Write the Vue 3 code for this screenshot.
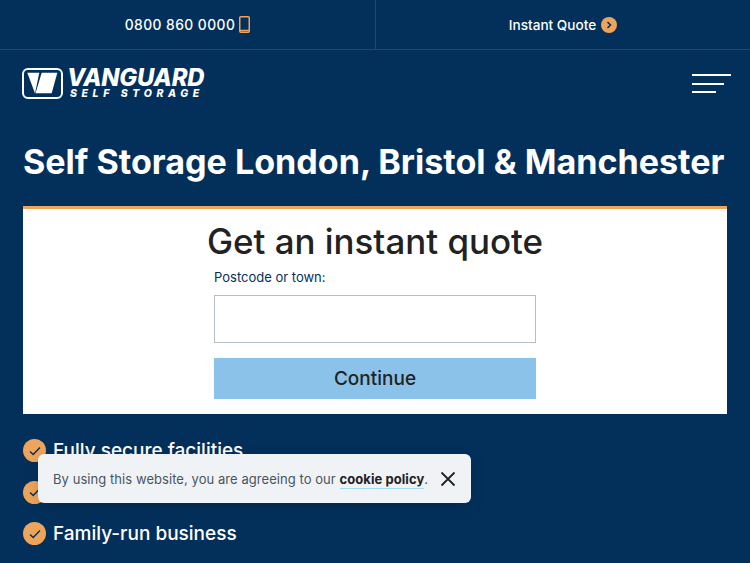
<script setup>
const features = ["Fully secure facilities", "Flexible storage terms", "Family-run business"];
</script>

<template>
  <div class="page">
    <div class="topbar">
      <a class="topbar-link phone-link">
        0800 860 0000
        <svg width="11" height="17" viewBox="0 0 11 17">
          <rect x="0.75" y="0.75" width="9.5" height="15.5" rx="1" fill="none" stroke="#eea55b" stroke-width="1.5" />
          <path d="M1 14.5h9" stroke="#eea55b" stroke-width="1.5" />
        </svg>
      </a>
      <a class="topbar-link">
        Instant Quote
        <span class="go">
          <svg width="6" height="8" viewBox="0 0 6 8">
            <path d="M1.5 1l3 3-3 3" fill="none" stroke="#03305b" stroke-width="1.6" />
          </svg>
        </span>
      </a>
    </div>

    <header class="brand">
      <div class="logo">
        <svg width="41" height="31" viewBox="0 0 41 31">
          <rect x="1" y="1" width="39" height="29" rx="5" fill="none" stroke="#fff" stroke-width="2" />
          <path d="M5.3 4.7h12L13 25.3z" fill="#fff" />
          <path d="M19.7 4.7h15.6l-5.6 20.6H13.5z" fill="#fff" />
        </svg>
        <div class="logo-text">
          <span class="logo-name">VANGUARD</span>
          <span class="logo-sub">SELF STORAGE</span>
        </div>
      </div>
      <button class="burger" aria-label="Menu">
        <span></span><span></span><span></span>
      </button>
    </header>

    <main class="content">
      <h1>Self Storage London, Bristol &amp; Manchester</h1>

      <section class="quote">
        <h2>Get an instant quote</h2>
        <form class="quote-form" @submit.prevent>
          <label for="postcode">Postcode or town:</label>
          <input id="postcode" type="text" />
          <button type="submit">Continue</button>
        </form>
      </section>

      <ul class="features">
        <li v-for="item in features" :key="item">
          <span class="tick">
            <svg width="14" height="12" viewBox="0 0 14 12">
              <path d="M2 6.5l3.2 3L12 2.5" fill="none" stroke="#03305b" stroke-width="1.4" />
            </svg>
          </span>
          {{ item }}
        </li>
      </ul>
    </main>

    <div class="cookie">
      <p>By using this website, you are agreeing to our <a>cookie policy</a>.</p>
      <button class="close" aria-label="Close">
        <svg width="16" height="16" viewBox="0 0 16 16">
          <path d="M1.5 1.5l13 13M14.5 1.5l-13 13" stroke="#222" stroke-width="1.8" />
        </svg>
      </button>
    </div>
  </div>
</template>

<style>
html,
body {
  margin: 0;
  background: #03305b;
  overflow: hidden;
}
</style>

<style scoped>
.page {
  position: relative;
  height: 563px;
  overflow: hidden;
  background: #03305b;
  color: #fff;
  font-family: Inter, "Liberation Sans", sans-serif;
}

.topbar {
  display: grid;
  grid-template-columns: 1fr 1fr;
  height: 49px;
  border-bottom: 1px solid #1d4a75;
}

.topbar-link {
  display: flex;
  align-items: center;
  justify-content: center;
  gap: 4px;
  font-size: 13.6px;
  font-weight: 500;
}

.phone-link {
  font-size: 13.8px;
  letter-spacing: 0.45px;
}

.topbar-link + .topbar-link {
  border-left: 1px solid #1d4a75;
}

.go {
  display: flex;
  align-items: center;
  justify-content: center;
  width: 16px;
  height: 16px;
  margin-left: 1px;
  border-radius: 50%;
  background: #eea55b;
}

.brand {
  display: flex;
  align-items: center;
  justify-content: space-between;
  padding: 16px 19px 0 22px;
  height: 35px;
}

.logo {
  display: flex;
  align-items: center;
  gap: 4px;
}

.logo-text {
  display: flex;
  flex-direction: column;
  font-style: italic;
  font-weight: 800;
  line-height: 1;
}

.logo-name {
  font-size: 23.8px;
  letter-spacing: -0.2px;
  line-height: 20px;
}

.logo-sub {
  margin: 1px 0 0 3px;
  font-size: 10.5px;
  letter-spacing: 4.6px;
  line-height: 10px;
}

.burger {
  display: flex;
  flex-direction: column;
  gap: 6.5px;
  padding: 0;
  border: 0;
  background: none;
  width: 39px;
}

.burger span {
  display: block;
  width: 100%;
  height: 2px;
  background: #fff;
}

.burger span:nth-child(2) {
  width: 32px;
}

.burger span:nth-child(3) {
  width: 24px;
}

.content {
  padding: 0 23px;
}

h1 {
  margin: 39px 0 0;
  font-size: 34.1px;
  font-weight: 700;
  line-height: 44px;
  white-space: nowrap;
}

.quote {
  margin-top: 22px;
  height: 205px;
  border-top: 3px solid #eea55b;
  background: #fff;
  color: #222;
  text-align: center;
}

h2 {
  margin: 0;
  padding-top: 12px;
  font-size: 34.9px;
  font-weight: 500;
  line-height: 40px;
}

.quote-form {
  display: flex;
  flex-direction: column;
  width: 322px;
  margin: 0 auto;
  text-align: left;
}

label {
  margin-top: 7px;
  color: #03305b;
  font-size: 13px;
  line-height: 18px;
}

input {
  box-sizing: border-box;
  height: 48px;
  margin-top: 9px;
  border: 1px solid #b4bfca;
  background: #fff;
}

.quote-form button {
  height: 41px;
  margin-top: 15px;
  border: 0;
  background: #8ac2ea;
  color: #222;
  font: 500 19px Inter, "Liberation Sans", sans-serif;
}

.features {
  list-style: none;
  margin: 25px 0 0;
  padding: 0;
}

.features li {
  display: flex;
  align-items: center;
  gap: 7px;
  height: 23px;
  margin-bottom: 18.5px;
  font-size: 19px;
  font-weight: 500;
}

.tick {
  display: flex;
  align-items: center;
  justify-content: center;
  width: 23px;
  height: 23px;
  border-radius: 50%;
  background: #eea55b;
}

.cookie {
  position: absolute;
  left: 38px;
  top: 454px;
  box-sizing: border-box;
  display: flex;
  align-items: center;
  justify-content: space-between;
  width: 433px;
  height: 49px;
  padding: 0 15px;
  border-radius: 6px;
  background: #eff3f6;
  box-shadow: 0 4px 14px rgba(0, 0, 0, 0.15);
  color: #4a5360;
  font-size: 13px;
}

.cookie p {
  margin: 0;
  letter-spacing: 0.06px;
}

.cookie a {
  padding-bottom: 1px;
  color: #222;
  font-weight: 700;
  border-bottom: 1px solid #a5dcf2;
}

.close {
  display: flex;
  padding: 0;
  border: 0;
  background: none;
}
</style>
